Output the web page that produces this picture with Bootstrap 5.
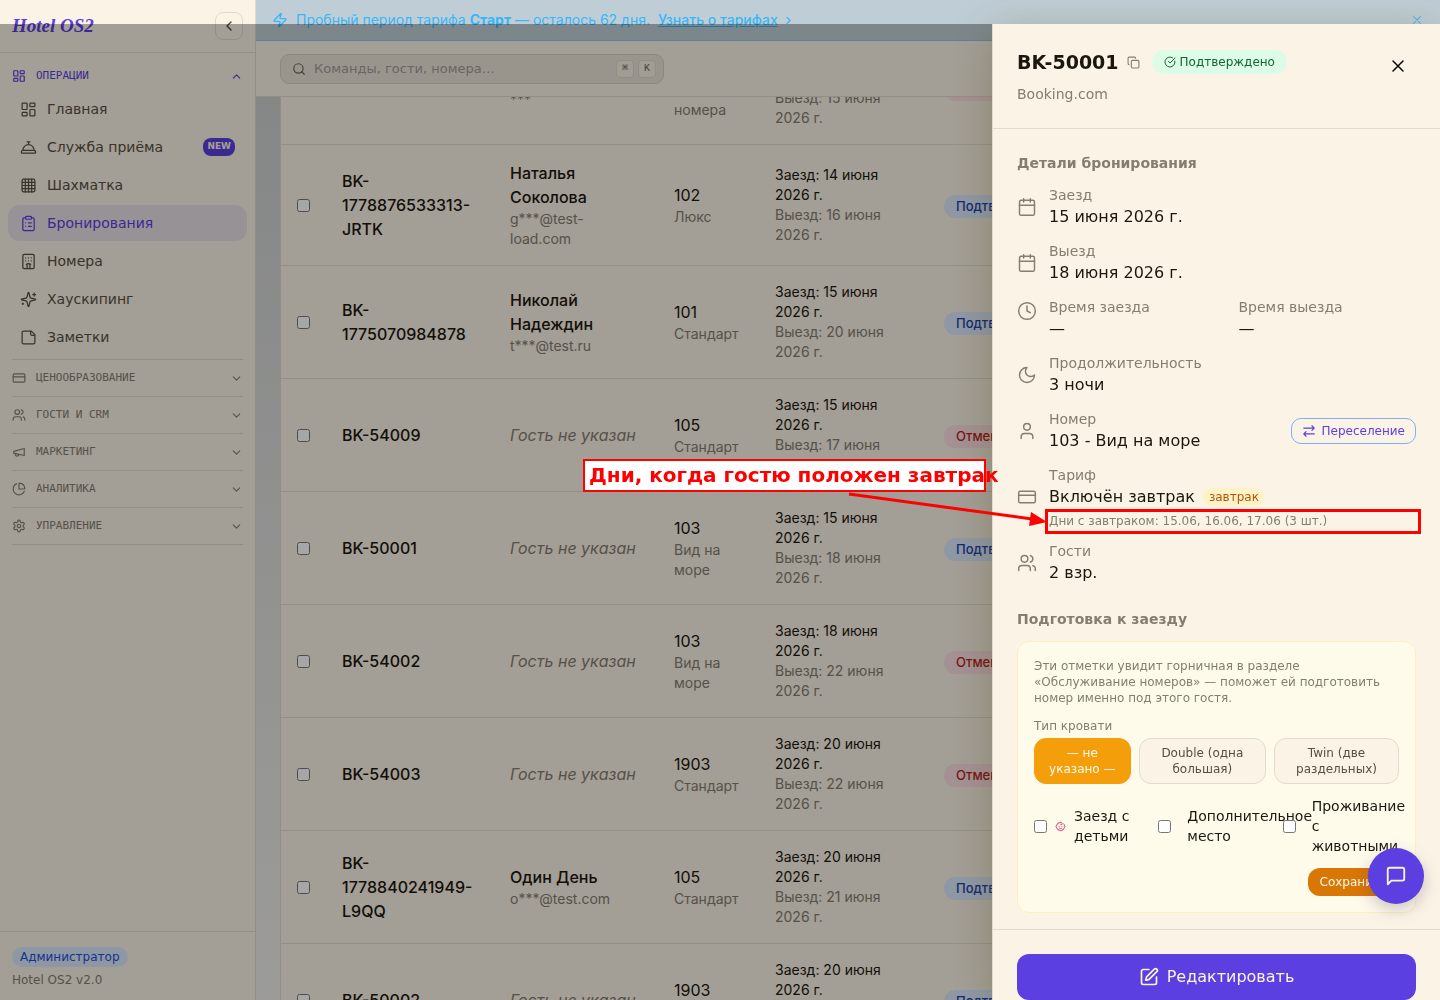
<!DOCTYPE html>
<html lang="ru">
<head>
<meta charset="utf-8">
<meta name="viewport" content="width=device-width, initial-scale=1">
<title>Hotel OS2 — Бронирования</title>
<link href="https://cdn.jsdelivr.net/npm/bootstrap@5.3.0/dist/css/bootstrap.min.css" rel="stylesheet">
<style>
:root{--cream:#fbf3e6;--line:#e2dbcd;--ink:#1c170e;--soft:#857d70;--brand:#5b3fe0}
body{font-family:"DejaVu Sans",sans-serif;font-size:14px;line-height:20px;color:var(--ink);background:var(--cream)}
svg{display:block;flex:none}
.ico{fill:none;stroke:currentColor;stroke-width:2;stroke-linecap:round;stroke-linejoin:round}
.thin{stroke-width:1.75}
a{color:inherit}
.shell{height:100vh;overflow:hidden}

.side{width:256px;flex:none;background:var(--cream);border-right:1px solid var(--line)}
.side-head{height:53px;padding:0 12px;border-bottom:1px solid var(--line)}
.brand-name{font:italic bold 19px/24px "Liberation Serif",serif;color:var(--brand)}
.collapse-btn{width:28px;height:28px;padding:0;border:1px solid var(--line);border-radius:8px;background:none;color:#4a443a}
.grp{width:100%;border:0;background:none;padding:0;gap:10px;font:11px/16px "DejaVu Sans Mono",monospace;color:var(--soft);height:36px}
.grp-open{color:var(--brand);height:30px}
.grp-wrap{margin:0 12px}
.grp-list>li{border-top:1px solid var(--line)}
.grp-list>li:last-child{border-bottom:1px solid var(--line)}
.side-link{height:36px;padding:0 12px;gap:10px;border-radius:12px;color:#57503f;text-decoration:none}
.side-link.current{background:#e8e1e6;color:var(--brand)}
.new-tag{background:var(--brand);color:var(--cream);font-size:9px;line-height:16px;font-weight:700;border-radius:8px;padding:0 4px 2px}
.side-foot{border-top:1px solid var(--line);padding:15px 12px 12px;gap:5px;font-size:12px;line-height:16px;color:var(--soft)}
.role-tag{background:#dbeafe;color:#1d4ed8;border-radius:10px;padding:2px 8px;font-size:12px;line-height:16px}

.work{min-width:0;font-family:Inter,sans-serif}
.trial{height:41px;flex:none;padding:0 16px;background:#bfced6;border-bottom:1px solid #84c6ec;color:#38b6f6;font-size:14px}
.trial button{border:0;background:none;padding:0;color:inherit}
.topbar{height:56px;flex:none;padding:0 24px;background:var(--cream);border-bottom:1px solid var(--line)}
.finder{width:384px;height:30px;padding:0 7px 0 11px;background:#ede5d8;border:1px solid #d9d1c4;border-radius:9px;color:#6d6557}
.finder input{border:0;background:none;outline:0;padding:0;min-width:0;font:13px/20px "DejaVu Sans",sans-serif;color:var(--ink)}
.finder input::placeholder{color:#a09c98;opacity:1}
.key{width:18px;height:18px;border:1px solid #e0d8ca;border-radius:4px;background:#f8f0e3;font:10px/16px "Liberation Mono",monospace;text-align:center;color:#6d6557}
.listing{min-height:0;overflow:hidden;padding:0 24px;background:linear-gradient(#cdd0cf,#f0efec)}
.scrolled{margin-top:-66px;background:var(--cream);border:1px solid var(--line);border-bottom:0}
.bookings{table-layout:fixed;width:100%;margin:0;font-size:16px;line-height:24px;color:var(--ink)}
.bookings td{padding:16px;border-bottom:1px solid var(--line);vertical-align:middle}
.bookings input,.flags input{width:13px;height:13px;margin:0;display:block;flex:none}
.sub{font-size:14px;line-height:20px}
.dim{color:var(--soft)}
.state{display:inline-block;border-radius:12px;padding:3px 12px;font-size:13px;line-height:17px;font-weight:500;background:#dbeafe;color:#1e40af;vertical-align:middle}
.state.off{background:#fcdfe4;color:#b91c1c}

.veil{position:fixed;inset:24px 0 0 0;background:rgba(0,0,0,.35);z-index:1040}
.offcanvas.offcanvas-end.drawer{--bs-offcanvas-width:448px;top:24px;background:#fbf4e6;color:var(--ink);border-left:1px solid var(--line);box-shadow:0 8px 40px rgba(70,60,10,.28);outline:0}
.drawer-head{padding:24px;border-bottom:1px solid #e2dccd}
.booking-no{font-size:19px;line-height:28px;font-weight:700;margin:0}
.plain{border:0;background:none;padding:0}
.ok-tag{background:#dcfce7;color:#166534;border-radius:12px;padding:4px 12px;font-size:12px;line-height:16px;margin-left:12px}
.drawer-main{padding:24px 24px 16px;overflow:hidden}
.drawer h3{font-size:14px;line-height:20px;font-weight:700;color:var(--soft);margin:0 0 12px}
.facts{gap:12px;margin-bottom:24px}
.fact{gap:12px}
.fact>svg{color:var(--soft)}
.fact .val{font-size:16px;line-height:24px}
.times{display:grid;grid-template-columns:1fr 1fr;gap:12px}
.move-btn{border:1px solid #7fb0f7;border-radius:10px;background:none;color:var(--brand);font-size:12px;line-height:16px;padding:4px 10px;gap:6px}
.meal-tag{background:#fef3c7;color:#b45309;border-radius:9px;font-size:12px;line-height:16px;padding:1px 6px}
.meal-days{font-size:12px;line-height:16px;margin-top:4px;color:var(--soft);position:relative}
.meal-days::after{content:"";position:absolute;inset:-4px -5px -5px -4px;border:3px solid #f00}
.prep{background:#fffbeb;border:1px solid #fdf0c0;border-radius:12px;padding:16px;font-size:12px;line-height:16px;color:var(--soft)}
.prep-label{margin:12px 0 4px}
.bed{border:1px solid var(--line);border-radius:12px;background:#fbf3e6;color:#57503f;padding:6px 12px;font-size:12px;line-height:16px}
.bed.picked{background:#f59e0b;border-color:#f59e0b;color:#fffbeb}
.flags{display:grid;grid-template-columns:repeat(3,minmax(0,1fr));gap:8px;margin:12px 0;font-size:14px;line-height:20px;color:var(--ink)}
.flags label{min-width:0;gap:8px}
.flags .wide{gap:16px}
.flags .wide input{position:relative;z-index:1}
.flags span{min-width:0}
.kid{color:#e11d6f}
.save-btn{border:0;border-radius:12px;background:#d97706;color:#fffbeb;font-size:12px;line-height:16px;padding:6px 12px}
.drawer-foot{border-top:1px solid #e2dccd;padding:24px 24px 0}
.edit-btn{height:46px;width:100%;border:0;border-radius:12px;background:var(--brand);color:var(--cream);font-size:16px;line-height:24px;gap:8px}
.chat-btn{position:fixed;right:16px;bottom:96px;width:56px;height:56px;border:0;border-radius:50%;background:var(--brand);color:var(--cream);z-index:1060;box-shadow:0 6px 16px rgba(60,40,80,.25)}
.note{position:fixed;top:459px;right:454px;width:403px;height:33px;border:2px solid #f00;background:#fff;color:#f00;font-size:20px;line-height:29px;font-weight:700;padding-left:4px;white-space:nowrap;z-index:1070}
.note-arrow{position:fixed;top:488px;right:392px;z-index:1070}
</style>
<script src="https://cdn.jsdelivr.net/npm/bootstrap@5.3.0/dist/js/bootstrap.bundle.min.js"></script>
</head>
<body>
<svg width="0" height="0" class="position-absolute" aria-hidden="true">
<symbol id="dash" viewBox="0 0 24 24"><rect x="3" y="3" width="7" height="9" rx="1"/><rect x="14" y="3" width="7" height="5" rx="1"/><rect x="14" y="12" width="7" height="9" rx="1"/><rect x="3" y="16" width="7" height="5" rx="1"/></symbol>
<symbol id="bell" viewBox="0 0 24 24"><path d="M3 20a1 1 0 0 1-1-1v-1a2 2 0 0 1 2-2h16a2 2 0 0 1 2 2v1a1 1 0 0 1-1 1ZM20 16a8 8 0 1 0-16 0M12 4v4M10 4h4"/></symbol>
<symbol id="grid" viewBox="0 0 24 24"><rect x="3" y="3" width="18" height="18" rx="2"/><path d="M3 7.5h18M3 12h18M3 16.5h18M7.5 3v18M12 3v18M16.500 3v18"/></symbol>
<symbol id="clip" viewBox="0 0 24 24"><rect x="8" y="2" width="8" height="4" rx="1"/><path d="M16 4h2a2 2 0 0 1 2 2v14a2 2 0 0 1-2 2H6a2 2 0 0 1-2-2V6a2 2 0 0 1 2-2h2M12 11h4M12 16h4M8 11h.01M8 16h.01"/></symbol>
<symbol id="hotel" viewBox="0 0 24 24"><rect x="4" y="2" width="16" height="20" rx="2"/><path d="M10 22v-6.57M14 15.43V22M15 16a5 5 0 0 0-6 0M12 11h.01M12 7h.01M16 11h.01M16 7h.01M8 11h.01M8 7h.01"/></symbol>
<symbol id="spark" viewBox="0 0 24 24"><path d="M9.94 15.5A2 2 0 0 0 8.5 14.06l-6.14-1.58a.5.5 0 0 1 0-.96L8.5 9.94A2 2 0 0 0 9.94 8.5l1.58-6.14a.5.5 0 0 1 .96 0l1.58 6.14a2 2 0 0 0 1.44 1.44l6.14 1.58a.5.5 0 0 1 0 .96l-6.14 1.58a2 2 0 0 0-1.44 1.44l-1.58 6.14a.5.5 0 0 1-.96 0zM20 3v4M22 5h-4M4 17v2M5 18H3"/></symbol>
<symbol id="sticky" viewBox="0 0 24 24"><path d="M16 3H5a2 2 0 0 0-2 2v14a2 2 0 0 0 2 2h14a2 2 0 0 0 2-2V8ZM15 3v4a2 2 0 0 0 2 2h4"/></symbol>
<symbol id="card-i" viewBox="0 0 24 24"><rect x="2" y="5" width="20" height="14" rx="2"/><path d="M2 10h20"/></symbol>
<symbol id="people" viewBox="0 0 24 24"><path d="M16 21v-2a4 4 0 0 0-4-4H6a4 4 0 0 0-4 4v2"/><circle cx="9" cy="7" r="4"/><path d="M22 21v-2a4 4 0 0 0-3-3.87M16 3.13a4 4 0 0 1 0 7.75"/></symbol>
<symbol id="mega" viewBox="0 0 24 24"><path d="m3 11 18-5v12L3 14v-3zM11.6 16.8a3 3 0 1 1-5.8-1.6"/></symbol>
<symbol id="pie" viewBox="0 0 24 24"><path d="M21 12c.55 0 1-.45.95-1a10 10 0 0 0-8.95-8.95c-.55-.05-1 .4-1 .95v8a1 1 0 0 0 1 1zM21.21 15.89A10 10 0 1 1 8 2.83"/></symbol>
<symbol id="gear" viewBox="0 0 24 24"><path d="M12.22 2h-.44a2 2 0 0 0-2 2v.18a2 2 0 0 1-1 1.73l-.43.25a2 2 0 0 1-2 0l-.15-.08a2 2 0 0 0-2.73.73l-.22.38a2 2 0 0 0 .73 2.73l.15.1a2 2 0 0 1 1 1.72v.51a2 2 0 0 1-1 1.74l-.15.09a2 2 0 0 0-.73 2.73l.22.38a2 2 0 0 0 2.73.73l.15-.08a2 2 0 0 1 2 0l.43.25a2 2 0 0 1 1 1.73V20a2 2 0 0 0 2 2h.44a2 2 0 0 0 2-2v-.18a2 2 0 0 1 1-1.73l.43-.25a2 2 0 0 1 2 0l.15.08a2 2 0 0 0 2.73-.73l.22-.39a2 2 0 0 0-.73-2.73l-.15-.08a2 2 0 0 1-1-1.74v-.5a2 2 0 0 1 1-1.74l.15-.09a2 2 0 0 0 .73-2.73l-.22-.38a2 2 0 0 0-2.73-.73l-.15.08a2 2 0 0 1-2 0l-.43-.25a2 2 0 0 1-1-1.73V4a2 2 0 0 0-2-2z"/><circle cx="12" cy="12" r="3"/></symbol>
<symbol id="down" viewBox="0 0 24 24"><path d="m6 9 6 6 6-6"/></symbol>
<symbol id="up" viewBox="0 0 24 24"><path d="m18 15-6-6-6 6"/></symbol>
<symbol id="left" viewBox="0 0 24 24"><path d="m15 18-6-6 6-6"/></symbol>
<symbol id="right" viewBox="0 0 24 24"><path d="m9 18 6-6-6-6"/></symbol>
<symbol id="zap" viewBox="0 0 24 24"><path d="M4 14a1 1 0 0 1-.78-1.63l9.9-10.2a.5.5 0 0 1 .86.46l-1.92 6.02A1 1 0 0 0 13 10h7a1 1 0 0 1 .78 1.63l-9.9 10.2a.5.5 0 0 1-.86-.46l1.92-6.02A1 1 0 0 0 11 14z"/></symbol>
<symbol id="cross" viewBox="0 0 24 24"><path d="M18 6 6 18M6 6l12 12"/></symbol>
<symbol id="search" viewBox="0 0 24 24"><circle cx="11" cy="11" r="8"/><path d="m21 21-4.3-4.3"/></symbol>
<symbol id="copy" viewBox="0 0 24 24"><rect x="8" y="8" width="14" height="14" rx="2"/><path d="M4 16c-1.1 0-2-.9-2-2V4c0-1.1.9-2 2-2h10c1.1 0 2 .9 2 2"/></symbol>
<symbol id="check" viewBox="0 0 24 24"><path d="M21.8 10A10 10 0 1 1 17 3.34M9 11l3 3L22 4"/></symbol>
<symbol id="cal" viewBox="0 0 24 24"><rect x="3" y="4" width="18" height="18" rx="2"/><path d="M8 2v4M16 2v4M3 10h18"/></symbol>
<symbol id="clock" viewBox="0 0 24 24"><circle cx="12" cy="12" r="10"/><path d="M12 6v6l4 2"/></symbol>
<symbol id="moon" viewBox="0 0 24 24"><path d="M12 3a6 6 0 0 0 9 9 9 9 0 1 1-9-9Z"/></symbol>
<symbol id="user" viewBox="0 0 24 24"><path d="M19 21v-2a4 4 0 0 0-4-4H9a4 4 0 0 0-4 4v2"/><circle cx="12" cy="7" r="4"/></symbol>
<symbol id="swap" viewBox="0 0 24 24"><path d="m17 3 4 4-4 4M3 7h18M7 21l-4-4 4-4M21 17H3"/></symbol>
<symbol id="baby" viewBox="0 0 24 24"><path d="M9 12h.01M15 12h.01M10 16c.5.3 1.2.5 2 .5s1.5-.2 2-.5M19 6.3a9 9 0 0 1 1.8 3.9 2 2 0 0 1 0 3.6 9 9 0 0 1-17.6 0 2 2 0 0 1 0-3.6A9 9 0 0 1 12 3c2 0 3.5 1.1 3.5 2.5s-.9 2.5-2 2.5c-.8 0-1.5-.4-1.5-1"/></symbol>
<symbol id="chat" viewBox="0 0 24 24"><path d="M21 15a2 2 0 0 1-2 2H7l-4 4V5a2 2 0 0 1 2-2h14a2 2 0 0 1 2 2z"/></symbol>
<symbol id="edit" viewBox="0 0 24 24"><path d="M12 3H5a2 2 0 0 0-2 2v14a2 2 0 0 0 2 2h14a2 2 0 0 0 2-2v-7M18.38 2.62a1 1 0 0 1 3 3l-9.01 9.01a2 2 0 0 1-.85.51l-2.87.84a.5.5 0 0 1-.62-.62l.84-2.87a2 2 0 0 1 .51-.85z"/></symbol>
</svg>

<div class="shell d-flex">
  <aside class="side d-flex flex-column">
    <div class="side-head d-flex align-items-center justify-content-between">
      <span class="brand-name">Hotel OS2</span>
      <button class="collapse-btn d-flex align-items-center justify-content-center" aria-label="Свернуть меню"><svg class="ico" width="16" height="16"><use href="#left"/></svg></button>
    </div>
    <nav class="flex-grow-1 pt-2">
      <div class="grp-wrap"><button class="grp grp-open d-flex align-items-center"><svg class="ico" width="14" height="14"><use href="#dash"/></svg><span>ОПЕРАЦИИ</span><svg class="ico ms-auto" width="13" height="13"><use href="#up"/></svg></button></div>
      <div class="d-flex flex-column px-2" style="gap:2px">
        <a href="#" class="side-link d-flex align-items-center"><svg class="ico thin" width="17" height="17"><use href="#dash"/></svg>Главная</a>
        <a href="#" class="side-link d-flex align-items-center"><svg class="ico thin" width="17" height="17"><use href="#bell"/></svg>Служба приёма<span class="new-tag ms-auto">NEW</span></a>
        <a href="#" class="side-link d-flex align-items-center"><svg class="ico thin" width="17" height="17"><use href="#grid"/></svg>Шахматка</a>
        <a href="#" class="side-link current d-flex align-items-center"><svg class="ico thin" width="17" height="17"><use href="#clip"/></svg>Бронирования</a>
        <a href="#" class="side-link d-flex align-items-center"><svg class="ico thin" width="17" height="17"><use href="#hotel"/></svg>Номера</a>
        <a href="#" class="side-link d-flex align-items-center"><svg class="ico thin" width="17" height="17"><use href="#spark"/></svg>Хаускипинг</a>
        <a href="#" class="side-link d-flex align-items-center"><svg class="ico thin" width="17" height="17"><use href="#sticky"/></svg>Заметки</a>
      </div>
      <ul class="grp-wrap grp-list list-unstyled pt-1">
        <li><button class="grp d-flex align-items-center"><svg class="ico" width="14" height="14"><use href="#card-i"/></svg><span>ЦЕНООБРАЗОВАНИЕ</span><svg class="ico ms-auto" width="13" height="13"><use href="#down"/></svg></button></li>
        <li><button class="grp d-flex align-items-center"><svg class="ico" width="14" height="14"><use href="#people"/></svg><span>ГОСТИ И CRM</span><svg class="ico ms-auto" width="13" height="13"><use href="#down"/></svg></button></li>
        <li><button class="grp d-flex align-items-center"><svg class="ico" width="14" height="14"><use href="#mega"/></svg><span>МАРКЕТИНГ</span><svg class="ico ms-auto" width="13" height="13"><use href="#down"/></svg></button></li>
        <li><button class="grp d-flex align-items-center"><svg class="ico" width="14" height="14"><use href="#pie"/></svg><span>АНАЛИТИКА</span><svg class="ico ms-auto" width="13" height="13"><use href="#down"/></svg></button></li>
        <li><button class="grp d-flex align-items-center"><svg class="ico" width="14" height="14"><use href="#gear"/></svg><span>УПРАВЛЕНИЕ</span><svg class="ico ms-auto" width="13" height="13"><use href="#down"/></svg></button></li>
      </ul>
    </nav>
    <div class="side-foot d-flex flex-column align-items-start"><span class="role-tag">Администратор</span><span>Hotel OS2 v2.0</span></div>
  </aside>

  <div class="work d-flex flex-column flex-grow-1">
    <div class="trial d-flex align-items-center gap-2">
      <svg class="ico" width="16" height="16"><use href="#zap"/></svg>
      <span>Пробный период тарифа <strong>Старт</strong> — осталось 62 дня.</span>
      <a href="#" class="d-flex align-items-center gap-1 fw-medium">Узнать о тарифах<svg class="ico" width="13" height="13"><use href="#right"/></svg></a>
      <button class="ms-auto" aria-label="Закрыть"><svg class="ico thin" width="14" height="14"><use href="#cross"/></svg></button>
    </div>
    <header class="topbar d-flex align-items-center">
      <div class="finder d-flex align-items-center gap-1">
        <svg class="ico me-1" width="14" height="14"><use href="#search"/></svg>
        <input class="flex-grow-1" type="text" aria-label="Поиск" placeholder="Команды, гости, номера…">
        <span class="key">⌘</span><span class="key">K</span>
      </div>
    </header>
    <main class="listing flex-grow-1">
      <div class="scrolled">
        <table class="bookings">
          <colgroup><col style="width:45px"><col style="width:168px"><col style="width:164px"><col style="width:101px"><col style="width:169px"><col></colgroup>
          <tbody>
            <tr><td><input type="checkbox" aria-label="Выбрать"></td><td class="fw-medium">BK-54010</td><td><div class="fw-medium">Гость</div><div class="sub dim">***</div></td><td>104<div class="sub dim">Люкс номера</div></td><td class="sub"><div>Заезд: 14 июня 2026 г.</div><div class="dim">Выезд: 15 июня 2026 г.</div></td><td><span class="state off">Отменено</span></td></tr>
            <tr><td><input type="checkbox" aria-label="Выбрать BK-1778876533313-JRTK"></td><td class="fw-medium">BK-1778876533313-JRTK</td><td><div class="fw-medium">Наталья Соколова</div><div class="sub dim">g***@test-load.com</div></td><td>102<div class="sub dim">Люкс</div></td><td class="sub"><div>Заезд: 14 июня 2026 г.</div><div class="dim">Выезд: 16 июня 2026 г.</div></td><td><span class="state">Подтверждено</span></td></tr>
            <tr><td><input type="checkbox" aria-label="Выбрать BK-1775070984878"></td><td class="fw-medium">BK-1775070984878</td><td><div class="fw-medium">Николай Надеждин</div><div class="sub dim">t***@test.ru</div></td><td>101<div class="sub dim">Стандарт</div></td><td class="sub"><div>Заезд: 15 июня 2026 г.</div><div class="dim">Выезд: 20 июня 2026 г.</div></td><td><span class="state">Подтверждено</span></td></tr>
            <tr><td><input type="checkbox" aria-label="Выбрать BK-54009"></td><td class="fw-medium">BK-54009</td><td class="fst-italic dim">Гость не указан</td><td>105<div class="sub dim">Стандарт</div></td><td class="sub"><div>Заезд: 15 июня 2026 г.</div><div class="dim">Выезд: 17 июня 2026 г.</div></td><td><span class="state off">Отменено</span></td></tr>
            <tr><td><input type="checkbox" aria-label="Выбрать BK-50001"></td><td class="fw-medium">BK-50001</td><td class="fst-italic dim">Гость не указан</td><td>103<div class="sub dim">Вид на море</div></td><td class="sub"><div>Заезд: 15 июня 2026 г.</div><div class="dim">Выезд: 18 июня 2026 г.</div></td><td><span class="state">Подтверждено</span></td></tr>
            <tr><td><input type="checkbox" aria-label="Выбрать BK-54002"></td><td class="fw-medium">BK-54002</td><td class="fst-italic dim">Гость не указан</td><td>103<div class="sub dim">Вид на море</div></td><td class="sub"><div>Заезд: 18 июня 2026 г.</div><div class="dim">Выезд: 22 июня 2026 г.</div></td><td><span class="state off">Отменено</span></td></tr>
            <tr><td><input type="checkbox" aria-label="Выбрать BK-54003"></td><td class="fw-medium">BK-54003</td><td class="fst-italic dim">Гость не указан</td><td>1903<div class="sub dim">Стандарт</div></td><td class="sub"><div>Заезд: 20 июня 2026 г.</div><div class="dim">Выезд: 22 июня 2026 г.</div></td><td><span class="state off">Отменено</span></td></tr>
            <tr><td><input type="checkbox" aria-label="Выбрать BK-1778840241949-L9QQ"></td><td class="fw-medium">BK-1778840241949-L9QQ</td><td><div class="fw-medium">Один День</div><div class="sub dim">o***@test.com</div></td><td>105<div class="sub dim">Стандарт</div></td><td class="sub"><div>Заезд: 20 июня 2026 г.</div><div class="dim">Выезд: 21 июня 2026 г.</div></td><td><span class="state">Подтверждено</span></td></tr>
            <tr><td><input type="checkbox" aria-label="Выбрать BK-50002"></td><td class="fw-medium">BK-50002</td><td class="fst-italic dim">Гость не указан</td><td>1903<div class="sub dim">Стандарт</div></td><td class="sub"><div>Заезд: 20 июня 2026 г.</div><div class="dim">Выезд: 22 июня 2026 г.</div></td><td><span class="state">Подтверждено</span></td></tr>
          </tbody>
        </table>
      </div>
    </main>
  </div>
</div>

<div class="veil"></div>

<section class="offcanvas offcanvas-end show drawer" data-bs-backdrop="false" data-bs-scroll="true" tabindex="-1" aria-label="Бронирование BK-50001">
  <div class="drawer-head d-flex justify-content-between align-items-start">
    <div>
      <div class="d-flex align-items-center">
        <h2 class="booking-no">BK-50001</h2>
        <button class="plain dim ms-2" aria-label="Скопировать номер"><svg class="ico" width="13" height="13"><use href="#copy"/></svg></button>
        <span class="ok-tag d-inline-flex align-items-center gap-1"><svg class="ico" width="12" height="12"><use href="#check"/></svg>Подтверждено</span>
      </div>
      <div class="dim mt-2">Booking.com</div>
    </div>
    <button class="plain p-2" aria-label="Закрыть"><svg class="ico thin" width="20" height="20"><use href="#cross"/></svg></button>
  </div>
  <div class="drawer-main flex-grow-1">
    <h3>Детали бронирования</h3>
    <div class="facts d-flex flex-column">
      <div class="fact d-flex align-items-center"><svg class="ico thin" width="20" height="20"><use href="#cal"/></svg><div><div class="dim">Заезд</div><div class="val">15 июня 2026 г.</div></div></div>
      <div class="fact d-flex align-items-center"><svg class="ico thin" width="20" height="20"><use href="#cal"/></svg><div><div class="dim">Выезд</div><div class="val">18 июня 2026 г.</div></div></div>
      <div class="fact d-flex align-items-start"><svg class="ico thin mt-1" width="20" height="20"><use href="#clock"/></svg><div class="times flex-grow-1"><div><div class="dim">Время заезда</div><div class="val">—</div></div><div><div class="dim">Время выезда</div><div class="val">—</div></div></div></div>
      <div class="fact d-flex align-items-center"><svg class="ico thin" width="20" height="20"><use href="#moon"/></svg><div><div class="dim">Продолжительность</div><div class="val">3 ночи</div></div></div>
      <div class="fact d-flex align-items-center"><svg class="ico thin" width="20" height="20"><use href="#user"/></svg><div class="flex-grow-1"><div class="dim">Номер</div><div class="val">103 - Вид на море</div></div><button class="move-btn d-flex align-items-center"><svg class="ico" width="14" height="14"><use href="#swap"/></svg>Переселение</button></div>
      <div class="fact d-flex align-items-center"><svg class="ico thin" width="20" height="20"><use href="#card-i"/></svg><div class="flex-grow-1"><div class="dim">Тариф</div><div class="val d-flex align-items-center gap-2">Включён завтрак<span class="meal-tag">завтрак</span></div><div class="meal-days">Дни с завтраком: 15.06, 16.06, 17.06 (3 шт.)</div></div></div>
      <div class="fact d-flex align-items-center"><svg class="ico thin" width="20" height="20"><use href="#people"/></svg><div><div class="dim">Гости</div><div class="val">2 взр.</div></div></div>
    </div>
    <h3>Подготовка к заезду</h3>
    <div class="prep">
      <p class="mb-0">Эти отметки увидит горничная в разделе «Обслуживание номеров» — поможет ей подготовить номер именно под этого гостя.</p>
      <div class="prep-label">Тип кровати</div>
      <div class="d-flex gap-2">
        <button class="bed picked">— не указано —</button>
        <button class="bed">Double (одна большая)</button>
        <button class="bed">Twin (две раздельных)</button>
      </div>
      <div class="flags">
        <label class="d-flex align-items-center"><input type="checkbox"><svg class="ico kid" width="11" height="11"><use href="#baby"/></svg><span>Заезд с детьми</span></label>
        <label class="wide d-flex align-items-center"><input type="checkbox"><span>Дополнительное место</span></label>
        <label class="wide d-flex align-items-center"><input type="checkbox"><span>Проживание с животными</span></label>
      </div>
      <div class="d-flex justify-content-end"><button class="save-btn">Сохранить</button></div>
    </div>
  </div>
  <div class="drawer-foot"><button class="edit-btn d-flex align-items-center justify-content-center"><svg class="ico" width="20" height="20"><use href="#edit"/></svg>Редактировать</button></div>
</section>

<button class="chat-btn d-flex align-items-center justify-content-center" aria-label="Чат"><svg class="ico" width="22" height="22"><use href="#chat"/></svg></button>

<div class="note">Дни, когда гостю положен завтрак</div>
<svg class="note-arrow" width="200" height="44" viewBox="0 0 200 44"><path d="M1 6 184 31" stroke="#f00" stroke-width="3"/><path d="M199 34 181 38 183 24Z" fill="#f00"/></svg>
</body>
</html>
